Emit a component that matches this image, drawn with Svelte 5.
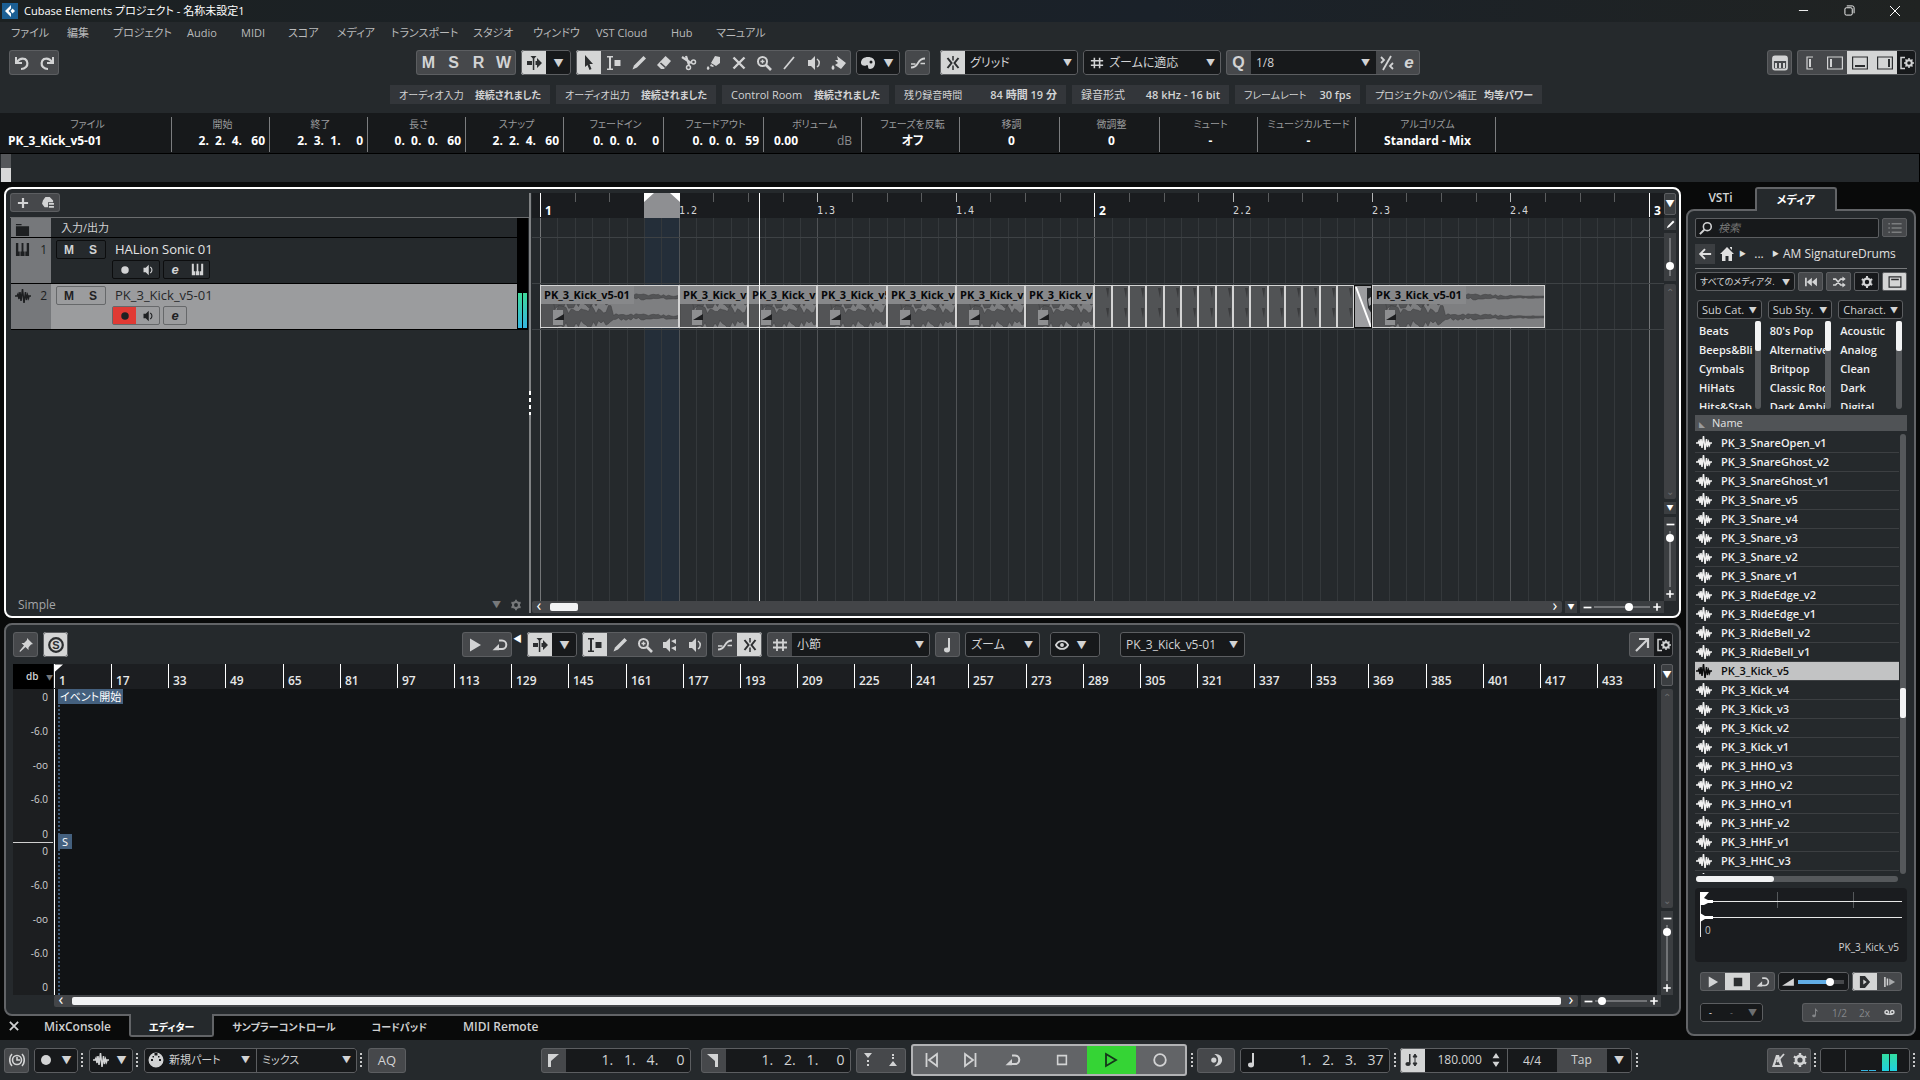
<script lang="ts">
  const menus = [
    ['ファイル', 56], ['編集', 46], ['プロジェクト', 74], ['Audio', 54], ['MIDI', 47], ['スコア', 49], ['メディア', 54],
    ['トランスポート', 82], ['スタジオ', 60], ['ウィンドウ', 63], ['VST Cloud', 75], ['Hub', 45], ['マニュアル', 60]
  ];

  const status = [
    ['オーディオ入力', '接続されました', 160],
    ['オーディオ出力', '接続されました', 160],
    ['Control Room', '接続されました', 167],
    ['残り録音時間', '84 時間 19 分', 171],
    ['録音形式', '48 kHz - 16 bit', 157],
    ['フレームレート', '30 fps', 125],
    ['プロジェクトのパン補正', '均等パワー', 176]
  ];

  const info = [
    ['ファイル', 'PK_3_Kick_v5-01', 172, 'start'],
    ['開始', '2.  2.  4.   60', 98, 'end'],
    ['終了', '2.  3.  1.     0', 98, 'end'],
    ['長さ', '0.  0.  0.   60', 98, 'end'],
    ['スナップ', '2.  2.  4.   60', 98, 'end'],
    ['フェードイン', '0.  0.  0.     0', 100, 'end'],
    ['フェードアウト', '0.  0.  0.   59', 100, 'end'],
    ['ボリューム', '0.00', 98, 'unit'],
    ['フェーズを反転', 'オフ', 98, 'center'],
    ['移調', '0', 100, 'center'],
    ['微調整', '0', 100, 'center'],
    ['ミュート', '-', 98, 'center'],
    ['ミュージカルモード', '-', 98, 'center'],
    ['アルゴリズム', 'Standard - Mix', 140, 'center']
  ];

  // kana runs are set one size smaller than latin text
  const isKana = (s: string | number) => /[ぁ-んァ-ヶ]/.test(`${s}`);

  const tools = ['arrow', 'range', 'pencil', 'eraser', 'scissors', 'glue', 'cross', 'zoom', 'line', 'speaker', 'bucket'];
  const toolNames = ['選択', '範囲選択', '鉛筆', '消しゴム', 'はさみ', 'のり', 'ミュート', 'ズーム', 'ライン', '再生', 'カラー'];
  let activeTool = $state(0);

  const editorTools = ['range', 'pencil', 'zoom', 'scrub', 'speaker'];
  let editorTool = $state(0);

  // timeline geometry
  const origin = 8;
  const beat = 138.6;
  const pos = (b: number) => Math.round(origin + b * beat);
  const gridLines = Array.from({ length: 65 }, (_, i) => ({ x: pos(i / 8), kind: i % 32 === 0 ? 'measure' : i % 8 === 0 ? 'beat' : 'minor' }));
  const rulerTicks = Array.from({ length: 33 }, (_, i) => {
    const b = i / 4;
    const bar = Math.floor(b / 4) + 1;
    const n = (b % 4) + 1;
    const kind = b % 4 === 0 ? 'measure' : Number.isInteger(b) ? 'beat' : 'minor';
    return { x: pos(b), kind, label: kind === 'measure' ? `${bar}` : kind === 'beat' ? `${bar}.${n}` : '' };
  });

  const events = [
    { start: 0, len: 1, type: 'long' },
    ...Array.from({ length: 6 }, (_, i) => ({ start: 1 + i / 2, len: 0.5, type: 'short' })),
    ...Array.from({ length: 15 }, (_, i) => ({ start: 4 + i / 8, len: 0.125, type: 'slice' })),
    { start: 5.875, len: 0.125, type: 'fade' },
    { start: 6, len: 1.25, type: 'long' }
  ];

  function wave(width: number, mid: number, short: boolean) {
    let seed = 9137;
    const rnd = () => (seed = (seed * 16807) % 2147483647) / 2147483647;
    const top: string[] = [];
    const bottom: string[] = [];
    for (let x = 0; x <= width; x += 2.5) {
      let a = 0;
      let b = 0;
      if (x < 13) a = b = 14;
      else if (x < (short ? width : 71)) {
        a = 3 + rnd() * 9;
        b = 3 + rnd() * 9;
      } else {
        const k = Math.max(0.15, 1 - (x - 72) / 110);
        a = 0.6 + rnd() * 3.5 * k;
        b = 0.6 + rnd() * 3.5 * k;
      }
      top.push(`${x},${(mid - a).toFixed(1)}`);
      bottom.unshift(`${x},${(mid + b).toFixed(1)}`);
    }
    return [...top, ...bottom].join(' ');
  }

  const bars = Array.from({ length: 29 }, (_, i) => ({ x: Math.round(i * 57.15), label: i < 28 ? `${i * 16 + 1}` : '' }));
  const scale = ['0', '-6.0', '-oo', '-6.0', '0'];

  const filters = [
    { name: 'Sub Cat.', items: ['Beats', 'Beeps&Bli', 'Cymbals', 'HiHats', 'Hits&Stab'] },
    { name: 'Sub Sty.', items: ["80's Pop", 'Alternative', 'Britpop', 'Classic Rock', 'Dark Ambient'] },
    { name: 'Charact.', items: ['Acoustic', 'Analog', 'Clean', 'Dark', 'Digital'] }
  ];

  const files = [
    'SnareOpen_v1', 'SnareGhost_v2', 'SnareGhost_v1', 'Snare_v5', 'Snare_v4', 'Snare_v3', 'Snare_v2', 'Snare_v1',
    'RideEdge_v2', 'RideEdge_v1', 'RideBell_v2', 'RideBell_v1', 'Kick_v5', 'Kick_v4', 'Kick_v3', 'Kick_v2', 'Kick_v1',
    'HHO_v3', 'HHO_v2', 'HHO_v1', 'HHF_v2', 'HHF_v1', 'HHC_v3', 'HHC_v2'
  ].map((n) => 'PK_3_' + n);
  let selected = $state('PK_3_Kick_v5');

  const lowerTabs = ['MixConsole', 'エディター', 'サンプラーコントロール', 'コードパッド', 'MIDI Remote'];
  let lowerTab = $state('エディター');

  const icons: Record<string, string> = {
    undo: '<path d="M2 2v6h6" fill="none" stroke="currentColor" stroke-width="2"/><path d="M3 7c2-3 5-4 8-3 3 2 3 6 1 8-1 1-3 2-5 2" fill="none" stroke="currentColor" stroke-width="2.2"/>',
    redo: '<path d="M14 2v6H8" fill="none" stroke="currentColor" stroke-width="2"/><path d="M13 7c-2-3-5-4-8-3-3 2-3 6-1 8 1 1 3 2 5 2" fill="none" stroke="currentColor" stroke-width="2.2"/>',
    autoscroll: '<path d="M1 6h5v4H1zM9.500 6H11V3l5 5-5 5v-3H9.500zM4.500 1h6L8.300 3.500v11.500H6.800V3.500z"/>',
    arrow: '<path d="M4 0l8 9H8.500l2 5-2 1-2-5L4 12z"/>',
    range: '<path d="M1 1h6v1.500H5v11h2V15H1v-1.500h2v-11H1zM8.500 5h6v6h-6z"/>',
    pencil: '<path d="M12.500 1l2.500 2.500-9 9-4.500 2L3 10.500z"/>',
    eraser: '<path d="M9.500 1L15 6 8 14H5L1 10z"/><path d="M4.500 8l5 4.500" stroke="#46484b" stroke-width="1.600"/>',
    scissors: '<path d="M1 2l9 6M5 1l3 9" stroke="currentColor" stroke-width="2.200"/><circle cx="12.500" cy="7" r="2" fill="none" stroke="currentColor" stroke-width="1.500"/><circle cx="7.500" cy="12.500" r="2" fill="none" stroke="currentColor" stroke-width="1.500"/>',
    glue: '<path d="M9 1l5 1v6l-4 3-5-3zM5 9l3 2-1 1-3-1zM2 11c2 2 2 3 0 4-2-1-1-3 0-4z"/>',
    cross: '<path d="M2.500 2.500l11 11M13.500 2.500l-11 11" stroke="currentColor" stroke-width="2.400"/>',
    zoom: '<circle cx="6.500" cy="6.500" r="4.500" fill="none" stroke="currentColor" stroke-width="2"/><path d="M10 10l5 5" stroke="currentColor" stroke-width="2.600"/><path d="M4.500 6.500h4M6.500 4.500v4" stroke="currentColor" stroke-width="1.400"/>',
    line: '<path d="M3 14L13 2" stroke="currentColor" stroke-width="1.800"/>',
    speaker: '<path d="M2 5h3l4-4v14l-4-4H2z"/><path d="M11 4c3 2 3 6 0 8" fill="none" stroke="currentColor" stroke-width="1.500"/>',
    scrub: '<path d="M1 5h3l4-4v14l-4-4H1zM9 4l5-2v5zM9 11l5-2v5z"/>',
    bucket: '<path d="M6 1l9 7-5 6-6-4 3-2-3-3h3zM2 10c2 2 2 4 0 5-2-1-2-3 0-5z"/>',
    palette: '<path fill-rule="evenodd" d="M8 2c4 0 7 2 7 6 0 3-2 6-5 6-3 0-1-4-3-4-3 2-6 0-6-2 0-4 3-6 7-6zM11 5.500a1.500 1.500 0 1 0 0 3 1.500 1.500 0 0 0 0-3z"/>',
    zerocross: '<path d="M1 12.500c9 0 5-9 14-9" fill="none" stroke="currentColor" stroke-width="1.800"/><path d="M1 9h4.500M10.500 8.500H15" stroke="currentColor" stroke-width="1.500"/>',
    snap: '<path d="M8 1v4.500M8 10.500V15" stroke="currentColor" stroke-width="1.500"/><path d="M2.500 3L6.500 8l-4 5M13.500 3L9.500 8l4 5" fill="none" stroke="currentColor" stroke-width="2"/>',
    hash: '<path d="M5 2v12M11 2v12M1 5.500h14M1 10.500h14" stroke="currentColor" stroke-width="1.800"/>',
    quant: '<path d="M12 1L4 15" stroke="currentColor" stroke-width="1.800"/><path d="M2 2l3 3-3 3M14 8l-3 3 3 3" fill="none" stroke="currentColor" stroke-width="1.800"/>',
    keyboard: '<path d="M3 1.500h10q2 0 2 2v9q0 2-2 2H3q-2 0-2-2v-9q0-2 2-2z" fill="none" stroke="currentColor" stroke-width="1.800"/><path d="M1 2h14v4H1zM3 8h2v5H3zM7 8h2v5H7zM11 8h2v5h-2z"/>',
    keys: '<path d="M1 1h2.500v9H5v5H1zM7 1h2v9h1.200v5H5.800v-5H7zM15 1h-2.500v9H11v5h4z"/>',
    zoneA: '<path d="M11 2H5v12h6" fill="none" stroke="currentColor" stroke-width="1.200"/><path d="M7 4h2v8H7z"/>',
    zoneB: '<path d="M.6 2h14.800v12H.6z" fill="none" stroke="currentColor" stroke-width="1.200"/><path d="M3 4h2v8H3z"/>',
    zoneC: '<path d="M.6 2h14.800v12H.6z" fill="none" stroke="currentColor" stroke-width="1.200"/><path d="M3 10h10v2H3z"/>',
    zoneD: '<path d="M.6 2h14.800v12H.6z" fill="none" stroke="currentColor" stroke-width="1.200"/><path d="M11 4h2v8h-2z"/>',
    setup: '<path d="M6 2.500H2v11h4" fill="none" stroke="currentColor" stroke-width="1.500"/><circle cx="10" cy="8" r="2.800" fill="none" stroke="currentColor" stroke-width="2"/><path d="M10 3v2M10 11v2M5 8h2M13 8h2M6.500 4.500L8 6M12 10l1.500 1.500M13.500 4.500L12 6M8 10l-1.500 1.500" stroke="currentColor" stroke-width="1.500"/>',
    gear: '<circle cx="8" cy="8" r="4" fill="none" stroke="currentColor" stroke-width="2.800"/><path d="M8 1v3M8 12v3M1.900 4.500l2.600 1.500M11.500 10l2.600 1.500M1.900 11.500L4.500 10M11.500 6l2.600-1.500" stroke="currentColor" stroke-width="2.400"/>',
    plus: '<path d="M8 2v12M2 8h12" stroke="currentColor" stroke-width="2.600"/>',
    minus: '<path d="M1 8h14" stroke="currentColor" stroke-width="3"/>',
    preset: '<path d="M2 5l3-4h5l4 4v2H8v6H4L1 9z"/><path d="M9 9h6M9 12.500h6" stroke="currentColor" stroke-width="2"/>',
    folder: '<path d="M1 2h6v1.500H1zM1 4.500h14V15H1z"/>',
    wave: '<path d="M0 8h2l1-2 1 5 1-7 1 9L7.500 1 9 15l1.500-11 1 8 1-5 1 3 .5-2h2" fill="none" stroke="currentColor" stroke-width="1.500"/>',
    dot: '<circle cx="8" cy="8" r="5"/>',
    play: '<path d="M3 1.500L14 8 3 14.500z"/>',
    stop: '<path d="M3 3h10v10H3z"/>',
    loop: '<path d="M7 3.500h3a4.200 4.200 0 0 1 0 8.600H3" fill="none" stroke="currentColor" stroke-width="2"/><path d="M.5 13.200L7 7v6.200z"/>',
    pin: '<path d="M9 1l6 6-2 .5-2.500 3v2.500L7.500 10 2 15l-.5-1L6 8.500 3.500 6H6l3-3z"/>',
    solo: '<circle cx="8" cy="8" r="6.800" fill="none" stroke="currentColor" stroke-width="2.200"/><text x="8" y="12" text-anchor="middle" font-size="11" font-weight="bold" font-family="Liberation Sans, sans-serif">S</text>',
    note: '<path d="M8 1h2v12H8z"/><ellipse cx="7" cy="13" rx="3" ry="2.400"/>',
    eye: '<path d="M1 8c3-6 11-6 14 0-3 6-11 6-14 0z" fill="none" stroke="currentColor" stroke-width="2"/><circle cx="8" cy="8" r="2.200"/>',
    external: '<path d="M2 14L13 3M5 2h9v9" fill="none" stroke="currentColor" stroke-width="2.200"/>',
    list: '<path d="M0 3h2M4 3h12M0 8h2M4 8h12M0 13h2M4 13h12" stroke="currentColor" stroke-width="1.800"/>',
    back: '<path d="M15 8H3M8 2.500L2.500 8 8 13.500" fill="none" stroke="currentColor" stroke-width="2.200"/>',
    home: '<path d="M8 1l7 7h-2v7H9.500v-5h-3v5H3V8H1zM11 1h2v3l-2-2z"/>',
    search: '<circle cx="9.500" cy="6.500" r="4.500" fill="none" stroke="currentColor" stroke-width="1.800"/><path d="M6 10l-5 5" stroke="currentColor" stroke-width="2.200"/>',
    reset: '<path d="M1 3h2v10H1zM9 3v10L3 8zM15 3v10L9 8z"/>',
    shuffle: '<path d="M1 4.500h3l6 7h3M1 11.500h3l6-7h3" fill="none" stroke="currentColor" stroke-width="2"/><path d="M12 1.500l4 3-4 3zM12 8.500l4 3-4 3z"/>',
    window: '<path d="M1 2h14v12H1z" fill="none" stroke="currentColor" stroke-width="1.600"/><path d="M3.500 5h9" stroke="currentColor" stroke-width="1.800"/>',
    prev: '<path d="M2.500 1v14M13 2L5 8l8 6z" fill="none" stroke="currentColor" stroke-width="1.800"/>',
    next: '<path d="M13.500 1v14M3 2l8 6-8 6z" fill="none" stroke="currentColor" stroke-width="1.800"/>',
    playline: '<path d="M3 2l10 6-10 6z" fill="none" stroke="currentColor" stroke-width="1.800"/>',
    stopline: '<path d="M3 3h10v10H3z" fill="none" stroke="currentColor" stroke-width="1.800"/>',
    recline: '<circle cx="8" cy="8" r="5.800" fill="none" stroke="currentColor" stroke-width="1.800"/>',
    punch: '<path d="M8 1a7 7 0 0 1 0 14H6c6-3 6-11 0-14z"/><circle cx="5.500" cy="8" r="3"/>',
    flagL: '<path d="M3 2h11L6 9v6H3z"/>',
    flagR: '<path d="M2 2h11v13h-3V9z"/>',
    locIn: '<path d="M4 1h8L8 6zM7 8h2v2H7zM7 12h2v2H7z"/>',
    locOut: '<path d="M4 14h8L8 9zM7 2h2v2H7zM7 5h2v2H7z"/>',
    tempo: '<path d="M5 2h1.500v10H5z"/><ellipse cx="4" cy="12" rx="2.600" ry="2"/><path d="M11 4v8M9 5l2-3 2 3zM9 11l2 3 2-3z" stroke="currentColor"/>',
    clock: '<circle cx="8" cy="8" r="4.500" fill="none" stroke="currentColor" stroke-width="1.600"/><path d="M8 5v3h3M3 2c-3 3-3 9 0 12M13 2c3 3 3 9 0 12" fill="none" stroke="currentColor" stroke-width="1.600"/>',
    midi: '<path fill-rule="evenodd" d="M8 .5a7.500 7.500 0 1 0 0 15 7.500 7.500 0 0 0 0-15zM6.500 1h3v2.500h-3zM3 7h2v2H3zM11 7h2v2h-2zM4.500 4h1.500v1.500H4.500zM10 4h1.500v1.500H10z"/>',
    metro: '<path fill-rule="evenodd" d="M6 3h3l4 12H2zM7 7l-2 6h5z"/><path d="M7 10l7-8" stroke="currentColor" stroke-width="1.800"/>',
    ramp: '<path d="M0 13L16 3v10z"/>',
    align: '<path fill-rule="evenodd" d="M2 1h6l6 7-6 7H2zM6 5v6l4-3z"/>',
    beats: '<path d="M2 2v12M5 4v8" stroke="currentColor" stroke-width="1.800"/><path d="M7 4l7 4-7 4z" opacity=".7"/>',
    tape: '<circle cx="4" cy="7.500" r="2.500" fill="none" stroke="currentColor" stroke-width="2.200"/><circle cx="12" cy="7.500" r="2.500" fill="none" stroke="currentColor" stroke-width="2.200"/><path d="M4 10.500h8" stroke="currentColor" stroke-width="2"/>',
    quaver: '<path d="M8 1h1.500c0 2 3 2 3 6-1-2-2-2-3-2v7H8z"/><ellipse cx="6.500" cy="12.500" rx="3" ry="2.200"/>',
    steps: '<path d="M8 0l4 6H4zM4 10h8l-4 6z"/>'
  };
</script>

{#snippet icon(name: string, size = 16)}
  <svg viewBox="0 0 16 16" width={size} height={size} fill="currentColor" aria-hidden="true">{@html icons[name]}</svg>
{/snippet}

{#snippet btn(name: string, label: string, cls = '')}
  <button class="btn {cls}" aria-label={label}>{@render icon(name)}</button>
{/snippet}

{#snippet dropdown(value: string, label: string, cls = '')}
  <span class="select {cls}">
    <select aria-label={label}><option>{value}</option></select>
    <i>▼</i>
  </span>
{/snippet}

{#snippet zoomBar(label: string, value: number, cls = '')}
  <div class="zoombar {cls}">
    <button aria-label="{label} -">{@render icon('minus', 9)}</button>
    <input type="range" aria-label={label} min="0" max="100" {value} />
    <button aria-label="{label} +">{@render icon('plus', 10)}</button>
  </div>
{/snippet}

{#snippet dots()}<span class="dots"></span>{/snippet}

<div class="app">
  <header class="titlebar">
    <svg class="logo" viewBox="0 0 16 16" width="16" height="16">
      <rect width="16" height="16" fill="#1b5f94" />
      <path d="M9 2L3 8l6 6V10.500L6.500 8 9 5.500z" fill="#fff" /><path d="M10.500 5.500L13 8l-2.500 2.500L8.500 8z" fill="#fff" />
    </svg>
    <span class="title">Cubase Elements プロジェクト - 名称未設定1</span>
    <div class="window-buttons">
      <button aria-label="最小化"><svg viewBox="0 0 12 12" width="11" height="11"><path d="M1 6h10" stroke="#fff" /></svg></button>
      <button aria-label="元に戻す"><svg viewBox="0 0 12 12" width="11" height="11" fill="none" stroke="#fff"><rect x="1" y="3" width="8" height="8" rx="1.500" /><path d="M3 1h6q2 0 2 2v6" /></svg></button>
      <button aria-label="閉じる"><svg viewBox="0 0 12 12" width="12" height="12"><path d="M1 1l10 10M11 1L1 11" stroke="#fff" /></svg></button>
    </div>
  </header>

  <nav class="menubar">
    {#each menus as [name, width]}
      <button style:width="{width}px">{name}</button>
    {/each}
  </nav>

  <div class="toolbar">
    <div class="group">{@render btn('undo', '元に戻す')}{@render btn('redo', 'やり直し')}</div>
    <div class="tool-center">
      <div class="group letters">
        {#each ['M', 'S', 'R', 'W'] as l}<button class="btn">{l}</button>{/each}
      </div>
      <div class="group">{@render btn('autoscroll', 'オートスクロール', 'on')}<button class="btn dark" aria-label="設定">▼</button></div>
      <div class="group">
        {#each tools as t, i}
          <button class="btn" class:on={activeTool === i} aria-label={toolNames[i]} onclick={() => (activeTool = i)}>{@render icon(t)}</button>
        {/each}
      </div>
      <div class="group dark color">{@render icon('palette')}<button class="btn dark" aria-label="カラー">▼</button></div>
      <div class="group zero">{@render btn('zerocross', 'ゼロクロス')}</div>
      <div class="group snap">{@render btn('snap', 'スナップ', 'on')}{@render dropdown('グリッド', 'スナップタイプ', 'flat')}</div>
      <div class="group dark grid-type"><span class="ic">{@render icon('hash', 14)}</span>{@render dropdown('ズームに適応', 'グリッドの種類', 'flat')}</div>
      <div class="group quantize"><button class="btn big">Q</button>{@render dropdown('1/8', 'クオンタイズ', 'flat')}{@render btn('quant', 'ソフトクオンタイズ', 'thin')}<button class="btn thin script">e</button></div>
    </div>
    <div class="tool-right">
      <div class="group">{@render btn('keyboard', 'キーボード')}</div>
      <div class="group">{@render btn('zoneA', 'インスペクター')}{@render btn('zoneB', '左ゾーン')}{@render btn('zoneC', '下ゾーン', 'on')}{@render btn('zoneD', '右ゾーン', 'on')}{@render btn('setup', 'レイアウト設定', 'dark small')}</div>
    </div>
  </div>

  <div class="status">
    {#each status as [label, value, width]}
      <div class="chip" style:width="{width}px"><span class:kana={isKana(label)}>{label}</span><b class:kana={isKana(value)}>{value}</b></div>
    {/each}
  </div>

  <div class="info">
    {#each info as [label, value, width, align]}
      <div class="cell {align}" style:width="{width}px">
        <small>{label}</small>
        <div><b>{value}</b>{#if align === 'unit'}<em>dB</em>{/if}</div>
      </div>
    {/each}
  </div>

  <div class="overview"><span class="view"></span></div>

  <div class="main">
    <div class="zones">
      <section class="project">
        <div class="tracklist">
          <div class="track-head"><div class="group low">{@render btn('plus', 'トラックを追加')}{@render btn('preset', 'プリセット')}</div></div>
          <div class="tracks">
            <div class="rows">
              <div class="track folder"><div class="tag">{@render icon('folder', 15)}</div><span class="io">入力/出力</span></div>
              <div class="track">
                <div class="tag">{@render icon('keys', 15)}<span>1</span></div>
                <div class="ms"><button>M</button><button>S</button></div>
                <div class="track-body">
                  <span class="name">HALion Sonic 01</span>
                  <div class="controls">
                    <div class="mini"><button aria-label="録音">{@render icon('dot', 12)}</button><button aria-label="モニター">{@render icon('speaker', 12)}</button></div>
                    <div class="mini"><button class="script">e</button><button aria-label="インストゥルメント">{@render icon('keys', 13)}</button></div>
                  </div>
                </div>
              </div>
              <div class="track active">
                <div class="tag">{@render icon('wave', 16)}<span>2</span></div>
                <div class="ms"><button>M</button><button>S</button></div>
                <div class="track-body">
                  <span class="name">PK_3_Kick_v5-01</span>
                  <div class="controls">
                    <div class="mini"><button class="rec" aria-label="録音">{@render icon('dot', 12)}</button><button aria-label="モニター">{@render icon('speaker', 12)}</button></div>
                    <div class="mini"><button class="script">e</button></div>
                  </div>
                </div>
              </div>
            </div>
            <div class="meter"><i></i><i></i></div>
          </div>
          <div class="track-foot"><span>Simple</span><button aria-label="プリセット選択">▼</button><button aria-label="設定">{@render icon('gear', 12)}</button></div>
        </div>
        <div class="divider"><i></i></div>
        <div class="timeline">
          <div class="stage">
            <div class="ruler">
              {#each rulerTicks as t}
                <span class="tick {t.kind}" style:left="{t.x}px"><em>{t.label}</em></span>
              {/each}
              <svg class="locators" viewBox="0 0 36 25" width="36" height="25"><path d="M0 0h36v25H0z" fill="#8e8f92" /><path d="M0 0h10L0 9zM36 0H26l10 9z" fill="#fff" /></svg>
            </div>
            <div class="canvas">
              <span class="cycle"></span>
              {#each gridLines as g}
                <span class="grid {g.kind}" style:left="{g.x}px"></span>
              {/each}
              <span class="lane a"></span><span class="lane b"></span><span class="lane c"></span>
              {#each events as e}
                {@const w = pos(e.start + e.len) - pos(e.start)}
                <div class="event {e.type}" style:left="{pos(e.start)}px" style:width="{w}px">
                  <svg width={w} height="42" viewBox="0 0 {w} 42" aria-hidden="true">
                    {#if e.type === 'slice'}
                      <path d="M11 2l2 10 1-10M11 22l2 10 1-10" fill="#3a3b3d" />
                    {:else if e.type === 'fade'}
                      <path d="M12 2h5v8l-4 3 1 7 3-2v10l-4-6-1-8z" fill="#25282b" /><path d="M1 1l15 40" stroke="#fff" stroke-width="2" />
                    {:else}
                      <polygon points={wave(w, 11, e.type === 'short')} fill="#535456" stroke="#3c3d3f" stroke-width="0.5" />
                      <polygon points={wave(w, 31, e.type === 'short')} fill="#535456" stroke="#3c3d3f" stroke-width="0.5" />
                      <path d="M12 24h10v15H12z" fill="#8e8f91" /><path d="M13 34l10-6v6z" fill="#1d1e20" />
                    {/if}
                  </svg>
                  {#if e.type === 'long' || e.type === 'short'}<span>PK_3_Kick_v5-01</span>{/if}
                </div>
              {/each}
            </div>
            <span class="playhead"></span>
          </div>
          <div class="scroll-row">
            <div class="hscroll"><button>‹</button><i class="thumb"></i><button class="last">›</button></div>
            <button class="tiny" aria-label="ズームプリセット">▼</button>
            {@render zoomBar('横ズーム', 64)}
          </div>
        </div>
        <div class="vcol">
          <button class="tall" aria-label="ルーラー">▼</button>
          <button class="tiny" aria-label="編集">{@render icon('pencil', 9)}</button>
          <div class="zoombar v bare"><input type="range" aria-label="波形ズーム" min="0" max="100" value="80" /></div>
          <div class="vscroll"><span>⌃</span><span>⌄</span></div>
          <button class="tiny" aria-label="縦ズームプリセット">▼</button>
          {@render zoomBar('縦ズーム', 6, 'v')}
        </div>
      </section>

      <section class="lower">
        <div class="editor-bar">
          <div class="group">{@render btn('pin', 'ピン')}</div>
          <div class="group">{@render btn('solo', 'ソロ', 'on')}</div>
          <div class="editor-center">
            <div class="group">{@render btn('play', '試聴')}{@render btn('loop', 'ループ')}</div>
            <span class="vol">◀</span>
            <div class="group">{@render btn('autoscroll', 'オートスクロール', 'on')}<button class="btn dark" aria-label="設定">▼</button></div>
            <div class="group">
              {#each editorTools as t, i}
                <button class="btn" class:on={editorTool === i} aria-label={t} onclick={() => (editorTool = i)}>{@render icon(t)}</button>
              {/each}
            </div>
            <div class="group">{@render btn('zerocross', 'ゼロクロス')}{@render btn('snap', 'スナップ', 'on')}</div>
            <div class="group bars">{@render btn('hash', 'グリッド')}{@render dropdown('小節', 'グリッド', 'flat')}</div>
            <div class="group">{@render btn('note', '音符')}</div>
            {@render dropdown('ズーム', 'ズーム', 'w75')}
            <div class="group dark eye">{@render icon('eye', 14)}<button class="btn dark" aria-label="表示">▼</button></div>
            {@render dropdown('PK_3_Kick_v5-01', 'クリップ', 'w125')}
          </div>
          <div class="group">{@render btn('external', '別ウィンドウ')}{@render btn('setup', '設定', 'dark small')}</div>
        </div>
        <div class="editor">
          <div class="editor-main">
            <div class="level-unit"><button>db <i>▼</i></button></div>
            <div class="bar-ruler">
              {#each bars as b}<span style:left="{b.x}px">{b.label}</span>{/each}
              <svg viewBox="0 0 10 9" width="9" height="9"><path d="M0 0h10L0 9z" fill="#fff" /></svg>
            </div>
            <div class="scale">
              <div>{#each scale as s}<span>{s}</span>{/each}</div>
              <div>{#each scale as s}<span>{s}</span>{/each}</div>
            </div>
            <div class="waveform">
              <span class="cursor"></span><span class="dotted"></span>
              <span class="flag">イベント開始</span><span class="flag sync">S</span>
            </div>
            <div></div>
            <div class="scroll-row">
              <div class="hscroll full"><button>‹</button><i class="thumb"></i><button class="last">›</button></div>
              {@render zoomBar('横ズーム', 6)}
            </div>
          </div>
          <div class="vcol">
            <button class="tall" aria-label="ルーラー">▼</button>
            <div class="vscroll"><span>⌃</span><span>⌄</span></div>
            {@render zoomBar('縦ズーム', 6, 'v')}
          </div>
        </div>
      </section>

      <div class="tabs">
        <button class="close" aria-label="閉じる">{@render icon('cross', 12)}</button>
        {#each lowerTabs as t}
          <button class:kana={isKana(t)} class:active={lowerTab === t} onclick={() => (lowerTab = t)}>{t}</button>
        {/each}
      </div>
    </div>

    <aside class="right-zone">
      <div class="right-tabs"><button>VSTi</button><button class="active">メディア</button></div>
      <div class="media">
        <div class="row gap3">
          <label class="search">{@render icon('search', 14)}<input type="text" placeholder="検索" aria-label="検索" /></label>
          <button class="btn low faded" aria-label="結果リスト">{@render icon('list')}</button>
        </div>
        <div class="crumbs">
          <button class="back" aria-label="戻る">{@render icon('back', 14)}</button>
          <button aria-label="ホーム">{@render icon('home')}</button><i>▶</i><span class="more">...</span><i>▶</i><span>AM SignatureDrums</span>
        </div>
        <div class="row gap3 media-tools">
          {@render dropdown('すべてのメディアタ.', 'メディアタイプ', 'low grow')}
          {@render btn('reset', 'リセット', 'low')}{@render btn('shuffle', 'シャッフル', 'low')}{@render btn('gear', '設定', 'low dark')}{@render btn('window', 'プレビュー', 'low on')}
        </div>
        <div class="filters">
          {#each filters as f}
            <div class="filter">
              {@render dropdown(f.name, f.name, 'low')}
              <div class="filter-body">
                <ul>{#each f.items as item}<li>{item}</li>{/each}</ul>
                <div class="scrollbar"><i></i></div>
              </div>
            </div>
          {/each}
        </div>
        <div class="name-head"><span>◣</span>Name</div>
        <div class="files">
          <ul>
            {#each files as f}
              <li><button class:selected={selected === f} onclick={() => (selected = f)}>{@render icon('wave', 16)}{f}</button></li>
            {/each}
          </ul>
          <div class="scrollbar"><i></i></div>
        </div>
        <div class="files-scroll"><i></i></div>
        <div class="preview">
          <svg viewBox="0 0 202 45" width="202" height="45">
            <path d="M77.500 0v16M153.500 0v16" stroke="#55585b" />
            <path d="M0 9.500h202M0 25.500h202M.5 0v45" stroke="#e8e8e8" />
            <path d="M0 0h9L4 6l4 2h5v3H8l-4 2H0zM0 21l5 3h8v3H5l-5 3z" fill="#fff" />
            <text x="5" y="42">0</text>
          </svg>
          <span>PK_3_Kick_v5</span>
        </div>
        <div class="row gap3 player">
          <div class="group low">{@render btn('play', '再生')}{@render btn('stop', '停止', 'on')}{@render btn('loop', 'ループ')}</div>
          <div class="group low dark volume">{@render icon('ramp', 14)}<input type="range" aria-label="音量" min="0" max="100" value="74" /></div>
          <div class="group low">{@render btn('align', '同期', 'on')}{@render btn('beats', '拍')}</div>
        </div>
        <div class="row player beat-row">
          <div class="group low dark key"><span>-</span><span class="dim">-</span><span class="dim">▼</span></div>
          <div class="group low half"><button class="btn" aria-label="音符">{@render icon('quaver', 12)}</button><button class="btn">1/2</button><button class="btn">2x</button><button class="btn bright" aria-label="テープ">{@render icon('tape', 13)}</button></div>
        </div>
      </div>
    </aside>
  </div>

  <footer class="transport">
    <div class="t-left">
      <div class="group">{@render btn('clock', '遅延補正')}</div>
      <div class="group dark w44">{@render icon('dot')}<button class="btn dark" aria-label="録音モード">▼</button></div>{@render dots()}
      <div class="group dark w44">{@render icon('wave')}<button class="btn dark" aria-label="オーディオ録音">▼</button></div>{@render dots()}
      <div class="group dark midi"><span class="ic">{@render icon('midi')}</span>{@render dropdown('新規パート', 'MIDI録音モード', 'flat')}{@render dropdown('ミックス', 'MIDIサイクル', 'flat sep')}</div>{@render dots()}
      <div class="group aq-box"><button class="btn aq">AQ</button></div>
    </div>
    <div class="t-center">
      <div class="group loc">{@render btn('flagL', '左ロケーター')}<span>1.   1.   4.     0</span></div>
      <div class="group loc second">{@render btn('flagR', '右ロケーター')}<span>1.   2.   1.     0</span></div>
      <div class="group">{@render btn('locIn', 'パンチイン')}{@render btn('locOut', 'パンチアウト')}</div>
      <div class="main-transport">
        <button class="narrow" aria-label="先頭へ">{@render icon('prev')}</button>
        <button class="narrow" aria-label="末尾へ">{@render icon('next')}</button>
        <button aria-label="サイクル">{@render icon('loop')}</button>
        <button aria-label="停止">{@render icon('stopline', 14)}</button>
        <button class="playing" aria-label="再生">{@render icon('playline')}</button>
        <button aria-label="録音">{@render icon('recline')}</button>
      </div>{@render dots()}
      <div class="group"><button class="btn punch" aria-label="プリロール">{@render icon('punch', 14)}</button></div>
      <div class="group loc time">{@render btn('note', '表示形式', 'dark')}<span>1.   2.   3.   37</span></div>{@render dots()}
      <div class="group dark tempo">{@render btn('tempo', 'テンポ', 'on')}<span class="bpm">180.000</span><button class="step" aria-label="テンポ増減">{@render icon('steps', 14)}</button><span class="sig">4/4</span><button class="btn tap">Tap</button><button class="btn dark" aria-label="タップ設定">▼</button></div>{@render dots()}
    </div>
    <div class="t-right">
      <div class="group">{@render btn('metro', 'メトロノーム', 'thin')}{@render btn('gear', '設定', 'thin')}</div>{@render dots()}
      <div class="group dark levels"><b></b><s></s><s></s><i></i><i></i></div>{@render dots()}
    </div>
  </footer>
</div>

<style>
  :global(body) {
    margin: 0;
    background: #090a0a;
  }

  .app {
    min-height: 100vh;
    display: flex;
    flex-direction: column;
    color: #d2d3d4;
    font-family: 'Open Sans', 'Noto Sans CJK JP', sans-serif;
    font-size: 12px;
    font-feature-settings: 'palt';
    line-height: 16px;
    background: #25292c;
    overflow: hidden;
  }

  .app * {
    box-sizing: border-box;
  }

  button,
  select,
  input {
    font: inherit;
    color: inherit;
    background: none;
    border: 0;
    padding: 0;
    margin: 0;
    font-feature-settings: inherit;
  }

  svg {
    display: block;
    flex: none;
  }

  i,
  em,
  small {
    font-style: normal;
  }

  ul {
    list-style: none;
    margin: 0;
    padding: 0;
  }

  /* title and menu */
  .titlebar {
    height: 22px;
    display: flex;
    align-items: center;
    padding-left: 2px;
    background: linear-gradient(90deg, #1c2122, #1a2129 60%, #202322);
  }

  .title {
    margin-left: 6px;
    font-size: 11px;
    color: #fff;
    white-space: nowrap;
  }

  .window-buttons {
    margin-left: auto;
    display: flex;
    padding-right: 2px;
  }

  .window-buttons button {
    width: 46px;
    display: flex;
    justify-content: center;
  }

  .menubar {
    height: 28px;
    display: flex;
    align-items: flex-start;
    padding: 3px 0 0 11px;
    font-size: 11px;
    color: #b9babb;
  }

  .menubar button {
    text-align: left;
    white-space: nowrap;
  }

  /* button groups */
  .group {
    display: flex;
    align-items: center;
    height: 25px;
    background: #46484b;
    border-radius: 3px;
    overflow: hidden;
    position: relative;
    flex: none;
  }

  .group::after {
    content: '';
    position: absolute;
    inset: 0;
    border: 1px solid #5c5e61;
    border-radius: 3px;
    pointer-events: none;
  }

  .btn {
    width: 25px;
    height: 25px;
    display: flex;
    align-items: center;
    justify-content: center;
    flex: none;
    background: #46484b;
    color: #d2d3d4;
  }

  .btn.on {
    background: #d4d5d5;
    color: #2c2e30;
  }

  .btn.dark,
  .group.dark {
    background: #17191b;
  }

  .btn.dark {
    font-size: 10px;
  }

  .btn.small {
    width: 19px;
  }

  .btn.thin {
    width: 22px;
  }

  .low,
  .low .btn {
    height: 19px;
  }

  .btn.low {
    border-radius: 2px;
    border: 1px solid #5c5e61;
  }

  .low :global(svg) {
    transform: scale(0.85);
  }

  .letters,
  .big {
    font: bold 16px 'Liberation Sans', sans-serif;
  }

  .script {
    font: italic bold 17px 'Liberation Sans', sans-serif;
  }

  .select {
    position: relative;
    display: flex;
    align-items: center;
    height: 25px;
    min-width: 0;
    background: #17191b;
    border: 1px solid #5c5e61;
    border-radius: 3px;
    flex: none;
  }

  .select select {
    appearance: none;
    width: 100%;
    height: 100%;
    padding: 0 18px 0 5px;
    white-space: nowrap;
  }

  .select i {
    position: absolute;
    right: 6px;
    font-size: 9px;
    pointer-events: none;
  }

  .select.flat {
    border: 0;
    border-radius: 0;
    flex: 1;
  }

  .select.low {
    height: 19px;
    font-size: 11px;
  }

  .select.low select {
    padding: 0 12px 0 4px;
  }

  .select.low i {
    right: 4px;
    font-size: 8px;
  }

  .w75 {
    width: 75px;
  }

  .w125 {
    width: 125px;
    margin-left: 15px;
  }

  /* main toolbar */
  .toolbar {
    display: flex;
    justify-content: space-between;
    padding: 0 4px 0 9px;
  }

  .tool-center,
  .tool-right {
    display: flex;
    gap: 5px;
  }

  .tool-center {
    padding-left: 10px;
  }

  .color,
  .w44,
  .eye {
    width: 44px;
    padding-left: 4px;
  }

  .eye {
    width: 50px;
    padding-left: 5px;
    margin-left: 5px;
  }

  .zero {
    margin-right: 5px;
  }

  .snap,
  .grid-type {
    width: 138px;
  }

  .ic {
    padding-left: 7px;
  }

  .quantize {
    width: 194px;
  }

  .status {
    display: flex;
    justify-content: center;
    gap: 6px;
    padding: 10px 0 9px 12px;
  }

  .chip {
    height: 19px;
    display: flex;
    align-items: center;
    justify-content: space-between;
    padding: 0 9px;
    background: #33363a;
    font-size: 11px;
    white-space: nowrap;
  }

  .kana {
    font-size: 10px;
  }

  .chip b {
    font-weight: 600;
  }

  .info {
    display: flex;
    height: 41px;
    padding-top: 4px;
    background: #17191b;
    border-bottom: 1px solid #000;
  }

  .cell {
    height: 35px;
    border-right: 1px solid #7b7d7f;
    padding: 0 4px 0 8px;
    text-align: center;
    flex: none;
  }

  .cell small {
    display: block;
    font-size: 10px;
    line-height: 15px;
    color: #9a9b9d;
  }

  .cell div {
    margin-top: 1px;
    color: #fff;
  }

  .cell b {
    white-space: pre;
  }

  .cell.start div {
    text-align: left;
  }

  .cell.end div {
    text-align: right;
  }

  .cell.unit div {
    display: flex;
    justify-content: space-between;
    padding: 0 5px 0 2px;
  }

  .cell em {
    color: #8b8c8e;
  }

  .overview {
    height: 28px;
    display: flex;
    border-right: 1px solid #000;
  }

  .view {
    width: 10px;
    margin-left: 1px;
    background: linear-gradient(#55575a 50%, #d8d8d8 50%);
  }

  /* zones */
  .main {
    flex: 1;
    display: flex;
    gap: 5px;
    padding: 5px 4px 0;
    background: #090a0a;
  }

  .zones {
    flex: 1;
    min-width: 0;
    display: flex;
    flex-direction: column;
  }

  .project {
    height: 431px;
    display: flex;
    padding: 4px 3px 3px 4px;
    background: #25292c;
    border: 2px solid #fff;
    border-radius: 8px;
  }

  .tracklist {
    width: 519px;
    display: flex;
    flex-direction: column;
  }

  .track-head {
    height: 25px;
    display: flex;
    border-bottom: 1px solid #6b6d6f;
  }

  .tracks {
    display: flex;
    padding: 0 1px;
  }

  .rows {
    flex: 1;
  }

  .track {
    display: flex;
    height: 46px;
    border-bottom: 1px solid #000;
  }

  .track.folder {
    height: 20px;
    align-items: center;
  }

  .tag {
    width: 40px;
    height: 100%;
    display: flex;
    align-items: flex-start;
    padding: 4px 4px 0;
    background: #76787b;
    color: #1d1f21;
  }

  .tag span {
    margin-left: auto;
  }

  .io {
    padding-left: 10px;
    font-size: 11px;
  }

  .ms,
  .mini {
    display: flex;
    height: 19px;
    border: 1px solid #0c0d0e;
    border-radius: 2px;
  }

  .ms {
    width: 50px;
    margin: 2px 9px 0 5px;
    font: bold 12px 'Liberation Sans', sans-serif;
  }

  .ms button {
    flex: 1;
  }

  .mini button {
    width: 23px;
    display: flex;
    align-items: center;
    justify-content: center;
  }

  .mini .script {
    font-size: 13px;
    width: 22px;
  }

  .name {
    display: block;
    height: 22px;
    line-height: 22px;
    font-size: 13px;
    color: #e4e4e4;
  }

  .controls {
    display: flex;
    gap: 3px;
    margin-left: -3px;
  }

  .track.active {
    background: #9b9c9e;
    color: #1f2123;
  }

  .active .name {
    color: #26282a;
  }

  .active .ms,
  .active .mini {
    border-color: #66686a;
  }

  .rec {
    background: #e03a34;
  }

  .meter {
    width: 11px;
    display: flex;
    gap: 1px;
    align-items: flex-end;
    justify-content: center;
    padding-bottom: 2px;
    background: #000;
  }

  .meter i {
    width: 4px;
    height: 35px;
    background: linear-gradient(#3fd99a, #35b5e0);
  }

  .track-foot {
    margin-top: auto;
    display: flex;
    align-items: center;
    gap: 9px;
    padding: 0 7px 0 8px;
    color: #a4a5a7;
  }

  .track-foot span {
    margin-right: auto;
  }

  .track-foot button {
    font-size: 9px;
    color: #77797b;
  }

  .divider {
    width: 2px;
    margin-right: 1px;
    display: flex;
    align-items: center;
    background: #808284;
  }

  .divider i {
    width: 2px;
    height: 24px;
    background: repeating-linear-gradient(#fff 0 4px, #25292c 4px 7px);
  }

  .timeline {
    flex: 1;
    min-width: 0;
    display: flex;
    flex-direction: column;
  }

  .stage {
    position: relative;
    flex: 1;
    display: flex;
    flex-direction: column;
    overflow: hidden;
  }

  .ruler {
    position: relative;
    height: 25px;
    background: #1a1c1f;
  }

  .tick {
    position: absolute;
    top: 0;
    height: 9px;
    border-left: 1px solid #5a5c5e;
  }

  .tick.beat {
    border-color: #b4b5b6;
  }

  .tick.measure {
    height: 24px;
    border-color: #fff;
  }

  .tick em {
    position: absolute;
    left: -1px;
    top: 11px;
    line-height: 14px;
    font-size: 10px;
    font-family: 'DejaVu Sans Mono', monospace;
    color: #d4d5d6;
  }

  .tick.measure em {
    left: 4px;
    top: 9px;
    font: bold 12px 'Open Sans', sans-serif;
    color: #fff;
  }

  .locators {
    position: absolute;
    left: 112px;
    top: 0;
  }

  .canvas {
    position: relative;
    flex: 1;
  }

  .cycle {
    position: absolute;
    left: 112px;
    width: 36px;
    top: 0;
    bottom: 0;
    background: #242e39;
  }

  .grid {
    position: absolute;
    top: 0;
    bottom: 0;
    width: 1px;
    background: #34383b;
  }

  .grid.beat {
    background: #505356;
  }

  .grid.measure {
    background: #747678;
  }

  .lane {
    position: absolute;
    left: 0;
    right: 0;
    height: 1px;
    background: #3e4245;
  }

  .lane.a {
    top: 19px;
  }

  .lane.b {
    top: 65px;
  }

  .lane.c {
    top: 111px;
  }

  .event {
    position: absolute;
    top: 67px;
    height: 43px;
    overflow: hidden;
    background: #7e7f81;
    border: 1px solid #d4d4d4;
  }

  .event span {
    position: absolute;
    left: 0;
    top: 0;
    max-width: 100%;
    height: 18px;
    padding: 0 0 0 3px;
    overflow: hidden;
    background: #87888a;
    color: #08090a;
    font-size: 11px;
    font-weight: 700;
    line-height: 17px;
    white-space: nowrap;
  }

  .event.long span {
    padding-right: 4px;
  }

  .event.slice {
    background: #515355;
  }

  .event.fade {
    background: #9c9da0;
    border-color: #111;
  }

  .playhead {
    position: absolute;
    left: 227px;
    top: 0;
    bottom: 0;
    width: 1px;
    background: #fff;
  }

  .scroll-row {
    display: flex;
    gap: 3px;
    height: 12px;
  }

  .hscroll {
    flex: 1;
    display: flex;
    align-items: center;
    background: #434548;
    border-radius: 2px;
    color: #fff;
    line-height: 10px;
  }

  .hscroll button,
  .zoombar button {
    width: 14px;
    display: flex;
    justify-content: center;
    color: #fff;
  }

  .hscroll button {
    height: 12px;
    font-size: 16px;
    line-height: 8px;
  }

  .hscroll .thumb {
    width: 28px;
    height: 8px;
    margin: 0 3px 0 4px;
    border-radius: 2px;
    background: #f2f3f4;
  }

  .hscroll.full .thumb {
    flex: 1;
  }

  .hscroll .last {
    margin-left: auto;
  }

  .tiny,
  .tall {
    width: 12px;
    height: 12px;
    display: flex;
    align-items: center;
    justify-content: center;
    background: #3b3e41;
    color: #fff;
    font-size: 7px;
  }

  .tall {
    height: 22px;
    border: 1px solid #5c5e61;
    border-radius: 2px;
    font-size: 9px;
  }

  .zoombar {
    width: 84px;
    height: 12px;
    display: flex;
    align-items: center;
    background: #3b3e41;
  }

  .zoombar input {
    flex: 1;
    min-width: 0;
  }

  input[type='range'] {
    appearance: none;
    height: 8px;
  }

  input[type='range']::-webkit-slider-runnable-track {
    height: 2px;
    background: #727477;
  }

  input[type='range']::-webkit-slider-thumb {
    appearance: none;
    width: 8px;
    height: 8px;
    margin-top: -3px;
    border-radius: 50%;
    background: #fff;
  }

  .zoombar.v {
    flex-direction: column;
    width: 12px;
    height: 84px;
  }

  .zoombar.v button {
    width: 12px;
    height: 14px;
    align-items: center;
  }

  .zoombar.v input {
    writing-mode: vertical-lr;
    width: 8px;
    min-height: 0;
  }

  .zoombar.v input::-webkit-slider-runnable-track {
    width: 2px;
    height: 100%;
  }

  .zoombar.v input::-webkit-slider-thumb {
    margin: 0 0 0 -3px;
  }

  .zoombar.v.bare {
    height: 48px;
    padding: 5px 0;
  }

  .vcol {
    width: 12px;
    display: flex;
    flex-direction: column;
    gap: 3px;
    flex: none;
    margin-bottom: 12px;
  }

  .vscroll {
    flex: 1;
    display: flex;
    flex-direction: column;
    justify-content: space-between;
    align-items: center;
    background: #3f4144;
    color: #6c6e70;
    font-size: 10px;
    border-radius: 2px;
    overflow: hidden;
  }

  /* lower zone */
  .lower {
    flex: 1;
    display: flex;
    flex-direction: column;
    margin-top: 5px;
    padding: 7px 6px 7px 7px;
    background: #25292c;
    border: 2px solid #626467;
    border-radius: 8px;
  }

  .editor-bar,
  .editor-center {
    display: flex;
    gap: 5px;
  }

  .editor-center {
    margin: 0 auto;
    padding-left: 10px;
  }

  .vol {
    width: 5px;
    display: flex;
    justify-content: flex-end;
    font-size: 9px;
    line-height: 14px;
    color: #fff;
  }

  .bars {
    width: 163px;
  }

  .editor {
    flex: 1;
    display: flex;
    margin-top: 7px;
  }

  .editor-main {
    flex: 1;
    display: grid;
    grid-template-columns: 41px 1fr;
    grid-template-rows: 25px 1fr 12px;
    min-width: 0;
  }

  .editor-main .zoombar {
    width: 80px;
  }

  .level-unit {
    background: #000;
    margin-right: 1px;
    display: flex;
    justify-content: flex-end;
    font-size: 10px;
    font-weight: 600;
  }

  .level-unit i {
    margin-left: 5px;
    font-size: 7px;
    color: #77797b;
  }

  .bar-ruler {
    position: relative;
    margin-right: 4px;
    background: #1c1e21;
  }

  .bar-ruler span {
    position: absolute;
    top: 0;
    height: 24px;
    padding: 9px 0 0 4px;
    line-height: 15px;
    border-left: 1px solid #fff;
    font-weight: 600;
    color: #e8e8e8;
  }

  .bar-ruler svg {
    position: absolute;
    top: 0;
    left: 0;
  }

  .scale {
    display: flex;
    flex-direction: column;
    margin-right: 1px;
    background: #1c1e20;
    font-size: 10px;
  }

  .scale div {
    flex: 1;
    display: flex;
    flex-direction: column;
    justify-content: space-between;
    align-items: flex-end;
    padding: 0 5px;
  }

  .scale div + div {
    border-top: 1px solid #d0d0d0;
  }

  .waveform {
    position: relative;
    margin-right: 4px;
    background: #111315;
  }

  .cursor {
    position: absolute;
    inset: 0 auto 0 0;
    width: 1px;
    background: #fff;
  }

  .dotted {
    position: absolute;
    inset: 0 auto 0 4px;
    border-left: 2px dotted #3e5a78;
  }

  .flag {
    position: absolute;
    left: 4px;
    top: 0;
    height: 15px;
    padding: 0 2px;
    line-height: 15px;
    font-size: 11px;
    color: #fff;
    background: #44607e;
  }

  .sync {
    top: 145px;
    padding: 0 4px;
  }

  .tabs {
    height: 24px;
    display: flex;
    padding-left: 4px;
    font-weight: 600;
    font-size: 12px;
    color: #cfd0d1;
  }

  .tabs button {
    height: 20px;
    padding: 2px 18px 0;
    white-space: nowrap;
  }

  .tabs .kana {
    font-size: 10px;
  }

  .tabs .close {
    padding: 0;
    width: 12px;
    margin-right: 6px;
  }

  .tabs .active {
    margin-top: -2px;
    padding-top: 4px;
    height: 23px;
    color: #fff;
    background: #25292c;
    border: 2px solid #626467;
    border-top: 0;
    border-radius: 0 0 3px 3px;
  }

  /* right zone */
  .right-zone {
    width: 230px;
    display: flex;
    flex-direction: column;
    margin-bottom: 4px;
  }

  .right-tabs {
    display: flex;
    height: 22px;
    font-weight: 600;
  }

  .right-tabs button {
    width: 69px;
  }

  .right-tabs .active {
    position: relative;
    width: 82px;
    height: 24px;
    font-size: 11px;
    color: #fff;
    background: #25292c;
    border: 2px solid #626467;
    border-bottom: 0;
    border-radius: 3px 3px 0 0;
  }

  .media {
    flex: 1;
    display: flex;
    flex-direction: column;
    padding: 7px;
    background: #25292c;
    border: 2px solid #626467;
    border-radius: 8px;
  }

  .row {
    display: flex;
  }

  .gap3 {
    gap: 3px;
  }

  .search {
    flex: 1;
    height: 20px;
    display: flex;
    align-items: center;
    gap: 5px;
    padding-left: 3px;
    background: #17191b;
    border: 1px solid #5c5e61;
    border-radius: 2px;
  }

  .search input {
    width: 100%;
    font-style: italic;
    font-size: 11px;
  }

  .faded {
    color: #7b7d7f;
  }

  .crumbs {
    display: flex;
    align-items: center;
    height: 31px;
    padding-top: 2px;
    border-bottom: 1px solid #77797b;
    color: #e0e0e0;
    white-space: nowrap;
  }

  .crumbs button {
    width: 20px;
    height: 20px;
    display: flex;
    align-items: center;
    justify-content: center;
    margin-right: 2px;
  }

  .crumbs .back {
    background: #3b3e41;
  }

  .crumbs i {
    font-size: 7px;
  }

  .crumbs .more {
    width: 26px;
    text-align: center;
  }

  .crumbs span:last-child {
    margin-left: 4px;
  }

  .media-tools {
    margin-top: 3px;
  }

  .select.grow {
    width: 100px;
    font-size: 9px;
  }

  .filters {
    display: flex;
    gap: 6px;
    margin: 9px 4px 0 2px;
  }

  .filter {
    flex: 1;
    min-width: 0;
  }

  .filter-body {
    display: flex;
    height: 88px;
    margin-top: 2px;
  }

  .filter-body ul {
    flex: 1;
    overflow: hidden;
    padding-left: 2px;
  }

  .filter-body li {
    height: 19px;
    line-height: 19px;
    font-size: 11px;
    font-weight: 600;
    color: #f0f0f0;
    white-space: nowrap;
  }

  .scrollbar {
    width: 6px;
    flex: none;
    margin-right: 1px;
    background: #55585b;
    border-radius: 3px;
  }

  .scrollbar i {
    display: block;
    height: 30px;
    border-radius: 2px;
    background: #f2f3f4;
  }

  .name-head {
    height: 16px;
    margin: 6px 0 3px;
    background: #505356;
    font-size: 11px;
    color: #e4e4e4;
  }

  .name-head span {
    font-size: 6px;
    padding: 0 7px 0 4px;
    color: #9a9b9d;
  }

  .files {
    flex: 1 1 0;
    min-height: 0;
    display: flex;
  }

  .files ul {
    flex: 1;
    overflow: hidden;
    contain: size;
  }

  .files li {
    height: 19px;
    border-bottom: 1px solid #3c3f42;
  }

  .files li button {
    width: 100%;
    height: 18px;
    display: flex;
    align-items: center;
    gap: 9px;
    padding-left: 1px;
    font-size: 11px;
    font-weight: 600;
    color: #f0f0f0;
  }

  .files li .selected {
    background: #c2c3c4;
    color: #0b0c0d;
  }

  .files .scrollbar {
    margin: 0 1px;
    padding-top: 254px;
  }

  .files-scroll {
    height: 6px;
    margin: 2px 9px 0 1px;
    background: #55585b;
    border-radius: 3px;
  }

  .files-scroll i {
    display: block;
    width: 78px;
    height: 6px;
    border-radius: 3px;
    background: #f2f3f4;
  }

  .preview {
    height: 74px;
    margin-top: 6px;
    padding: 4px 5px;
    background: #1a1c1f;
    border-radius: 4px;
    font-size: 11px;
  }

  .preview text {
    font-size: 10px;
    fill: #c0c0c0;
  }

  .preview span {
    display: block;
    text-align: right;
    padding-right: 3px;
    margin-top: 2px;
    font-size: 10px;
  }

  .player {
    padding: 0 5px;
    margin-top: 10px;
  }

  .player.beat-row {
    justify-content: space-between;
    margin-top: 12px;
    margin-bottom: 5px;
  }

  .volume {
    width: 71px;
    gap: 3px;
    padding: 0 5px 0 3px;
  }

  .volume input {
    flex: 1;
    min-width: 0;
  }

  .volume input::-webkit-slider-runnable-track {
    height: 4px;
    background: linear-gradient(90deg, #62aee6 74%, #46484b 74%);
  }

  .volume input::-webkit-slider-thumb {
    margin-top: -2px;
  }

  .key {
    width: 63px;
  }

  .key span {
    flex: 1;
    text-align: center;
    font-size: 9px;
    color: #fff;
  }

  .key .dim {
    color: #6c6e70;
  }

  .half .btn {
    font-size: 10px;
    color: #85878a;
  }

  .half .bright {
    color: #d2d3d4;
  }

  /* transport */
  .transport {
    height: 40px;
    display: flex;
    justify-content: space-between;
    align-items: center;
    padding: 0 1px 0 4px;
    background: #25292c;
  }

  .t-left,
  .t-center,
  .t-right {
    display: flex;
    align-items: center;
  }

  .t-center {
    padding-left: 9px;
  }

  .dots {
    width: 2px;
    height: 14px;
    margin: 0 4px 0 3px;
    background: repeating-linear-gradient(#c8c9ca 0 2px, transparent 2px 4px);
  }

  .t-left .w44 {
    margin-left: 5px;
  }

  .dots + .w44,
  .dots + .midi,
  .dots + .aq-box {
    margin-left: 2px;
  }

  .midi {
    width: 213px;
  }

  .midi .ic {
    padding-left: 4px;
  }

  .midi :global(.sep) {
    flex: none;
    width: 101px;
    border-left: 1px solid #5c5e61;
  }

  .midi :global(select) {
    font-size: 11px;
  }

  .aq {
    width: 38px;
    font-size: 13px;
  }

  .loc {
    width: 150px;
    margin-right: 10px;
    background: #17191b;
  }

  .loc.second {
    margin-right: 5px;
  }

  .loc span {
    flex: 1;
    padding-right: 6px;
    text-align: right;
    font-size: 14px;
    white-space: pre;
  }

  .main-transport {
    height: 32px;
    display: flex;
    margin: 0 1px 0 5px;
    border: 2px solid #b2b3b5;
    border-radius: 3px;
    background: #626467;
  }

  .main-transport button {
    width: 49px;
    display: flex;
    align-items: center;
    justify-content: center;
  }

  .main-transport .narrow {
    width: 38px;
  }

  .main-transport .playing {
    background: #35d435;
    color: #14351a;
  }

  .punch {
    width: 38px;
  }

  .time {
    margin: 0 1px 0 5px;
  }

  .tempo {
    width: 232px;
    margin-right: 1px;
  }

  .bpm {
    padding-left: 13px;
    width: 64px;
  }

  .step {
    width: 18px;
  }

  .sig {
    flex: 1;
    height: 25px;
    line-height: 25px;
    text-align: center;
    border-left: 1px solid #5c5e61;
  }

  .tap {
    width: 50px;
  }

  .levels {
    width: 90px;
    align-items: flex-end;
    padding: 0 13px 2px 0;
    gap: 1px;
  }

  .levels b {
    width: 26px;
    height: 21px;
    margin-right: auto;
    border-right: 1px solid #55585b;
  }

  .levels s {
    width: 7px;
    height: 1px;
    background: #35b5e0;
  }

  .levels s + i {
    margin-left: 5px;
  }

  .levels i {
    width: 7px;
    height: 17px;
    background: linear-gradient(#32dda0, #20d0e0);
  }
</style>
